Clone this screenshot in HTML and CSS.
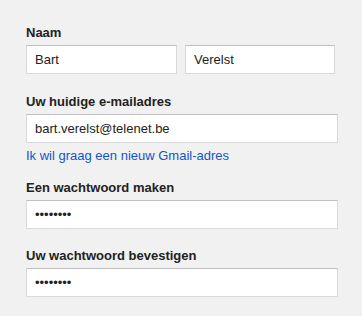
FILE: index.html
```html
<!DOCTYPE html>
<html lang="nl">
<head>
  <meta charset="UTF-8" />
  <meta name="viewport" content="width=device-width, initial-scale=1.0"/>
  <title>Account maken</title>
  <link rel="stylesheet" href="styles.css">
</head>
<body>

  <!-- Signup form -->
  <form class="signup-form">
    <div class="field">
      <label class="field-label">Naam</label>
      <div class="name-row">
        <input type="text" class="text-input" value="Bart" />
        <input type="text" class="text-input" value="Verelst" />
      </div>
    </div>

    <div class="field field-email">
      <label class="field-label" for="email">Uw huidige e-mailadres</label>
      <input type="text" id="email" class="text-input wide" value="bart.verelst@telenet.be" />
      <a href="#" class="gmail-link">Ik wil graag een nieuw Gmail-adres</a>
    </div>

    <div class="field field-password">
      <label class="field-label" for="password">Een wachtwoord maken</label>
      <input type="password" id="password" class="text-input wide" value="geheim12" />
    </div>

    <div class="field field-confirm">
      <label class="field-label" for="confirm">Uw wachtwoord bevestigen</label>
      <input type="password" id="confirm" class="text-input wide" value="geheim12" />
    </div>
  </form>

</body>
</html>
```

FILE: styles.css
```css
body {
  margin: 0;
  background: #f1f1f1;
  font-family: "Liberation Sans", Arial, sans-serif;
  font-size: 13px;
  color: #222;
}
.signup-form {
  padding: 25px 0 0 26px;
}
.field-label {
  display: block;
  font-weight: bold;
  line-height: 16px;
  margin-bottom: 4px;
  color: #222;
}
.name-row {
  display: grid;
  grid-template-columns: 151px 150px;
  column-gap: 8px;
}
.text-input {
  display: block;
  box-sizing: border-box;
  width: 100%;
  height: 29px;
  margin: 0;
  padding: 0 8px;
  border: 1px solid #d9d9d9;
  border-top-color: #c0c0c0;
  border-radius: 0;
  background: #fff;
  font-family: "Liberation Sans", Arial, sans-serif;
  font-size: 13px;
  color: #222;
  outline: none;
}
.text-input.wide {
  width: 312px;
}
.field-email {
  margin-top: 20px;
}
.gmail-link {
  display: block;
  margin-top: 5px;
  line-height: 16px;
  color: #1155cc;
  text-decoration: none;
}
.field-password {
  margin-top: 16px;
}
.field-confirm {
  margin-top: 19px;
}
```
